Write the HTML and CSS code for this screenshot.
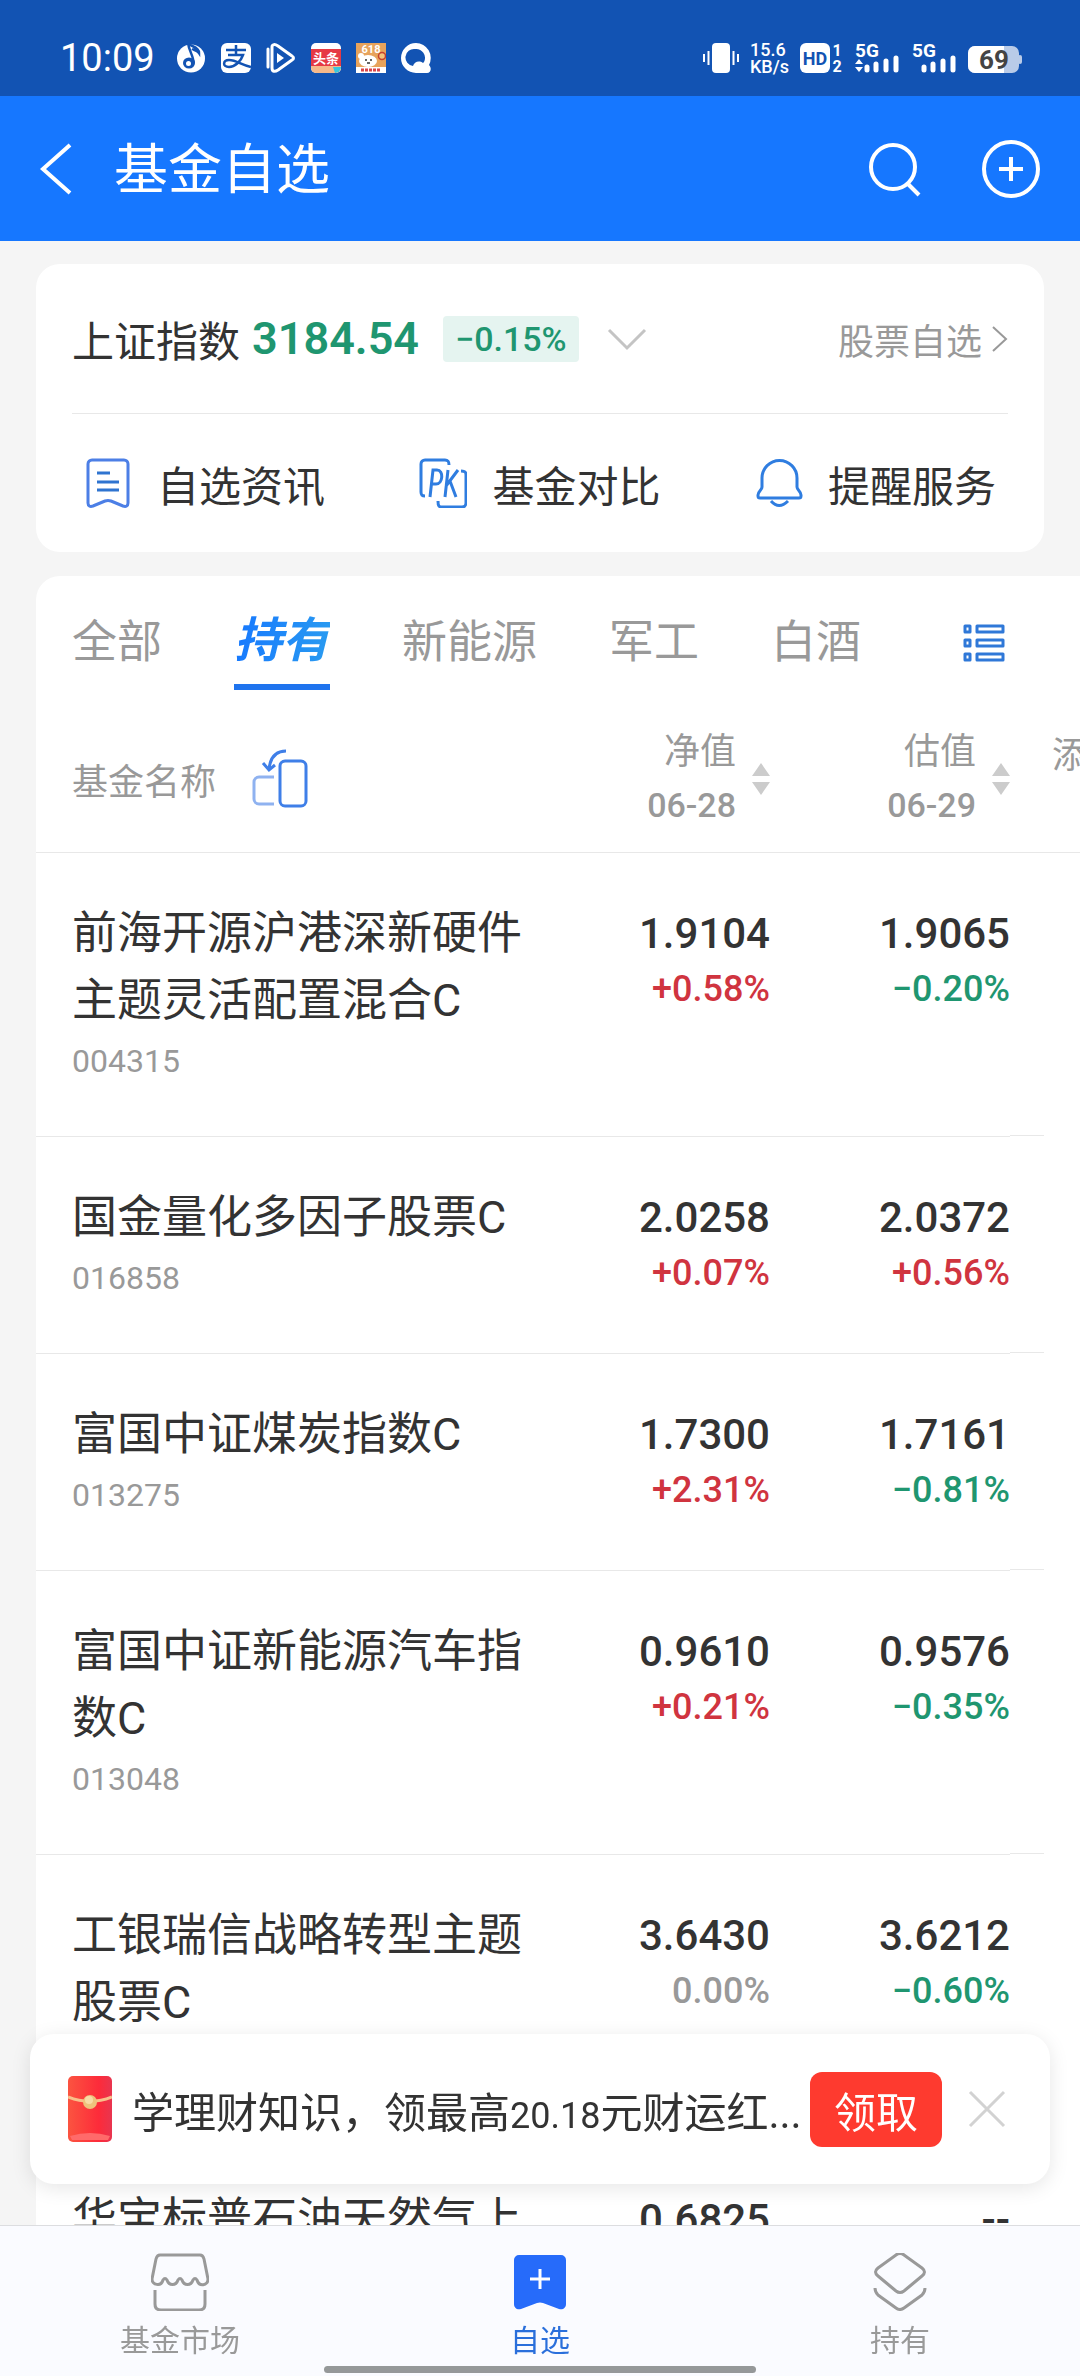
FILE: index.html
```
<!DOCTYPE html>
<html lang="zh-CN">
<head>

	<meta charset="utf-8" />
	<meta name="viewport" content="width=device-width, initial-scale=1" />
	<title>基金自选</title>

	<link rel="stylesheet" href="styles.css">

</head>

<body>

<div class="status">
	<div class="status-left">
		<span class="clock">10:09</span>
		<svg width="30" height="30" viewBox="0 0 30 30">
			<circle cx="15" cy="15.500" r="14" fill="#fff" />
			<ellipse cx="13" cy="20" rx="6" ry="5.500" fill="#1253b3" />
			<path d="M17.500 20C18 14 13 8 12 0c2 4 11 3 11 10-2-3-5-3-7-4" fill="none" stroke="#1253b3" stroke-width="2.500" />
			<circle cx="12.500" cy="20.500" r="2.500" fill="#fff" />
		</svg>
		<svg width="30" height="30" viewBox="0 0 30 30">
			<rect width="30" height="30" rx="6" fill="#fff" />
			<path d="M5 7h20M15 2v10M7 12h15c-2 6-8 12-14 12-7 0-6-7 0-7 7 0 13 5 22 7" fill="none" stroke="#1253b3" stroke-width="2.500" />
		</svg>
		<svg width="30" height="30" viewBox="0 0 30 30">
			<path d="M2 6v18M6 4c0-3 3-3 6-1l14 10c2 1 2 3 0 4L12 27c-3 2-6 2-6-2z" fill="none" stroke="#fff" stroke-width="3" stroke-linejoin="round" stroke-linecap="round" />
			<path d="M11 10l7 5-7 5z" fill="#fff" />
		</svg>
		<svg width="30" height="30" viewBox="0 0 30 30">
			<rect width="30" height="30" rx="5" fill="#fff" />
			<path d="M0 6h30v18H0z" fill="#e63a45" />
			<path d="M0 23h30v2a5 5 0 0 1-5 5H5a5 5 0 0 1-5-5z" fill="#f6b98a" />
			<path d="M22 24h8a6 6 0 0 1-6 6z" fill="#39c6dd" />
			<text class="icon-cjk" x="15" y="20" font-size="13" fill="#fff">头条</text>
		</svg>
		<svg width="30" height="30" viewBox="0 0 30 30">
			<rect width="30" height="30" fill="#e7a35c" />
			<path d="M0 24h30v6H0z" fill="#fff" />
			<path d="M5 27h19" stroke="#d9454a" stroke-width="3" stroke-dasharray="3 1" />
			<ellipse cx="12" cy="18" rx="9" ry="6" fill="#fff" />
			<circle cx="5" cy="13" r="3" fill="#fff" />
			<circle cx="26" cy="13" r="3.500" fill="#f3c27a" stroke="#c5402f" stroke-width="1.500" />
			<path d="M9 17h2M14 17h2M11 20h3" stroke="#333" stroke-width="1.500" />
			<text class="icon-text" x="15" y="10" font-size="11" fill="#fff">618</text>
		</svg>
		<svg width="30" height="30" viewBox="0 0 30 30">
			<path fill="#fff" fill-rule="evenodd" d="M15 0a15 15 0 0 1 13 22c3 3 2 8-2 8H15A15 15 0 0 1 15 0zM14 6a8.500 8.500 0 0 0-2 17c1-4 6-6 10-3l1-1A9 9 0 0 0 14 6z" />
		</svg>
	</div>
	<div class="status-right">
		<svg width="36" height="30" viewBox="0 0 36 30">
			<rect x="9" width="18" height="30" rx="4" fill="#fff" />
			<path d="M1 11v8M5.500 8v14M30.500 8v14M35 11v8" stroke="#fff" stroke-width="2" />
		</svg>
		<span class="speed">15.6<br>KB/s</span>
		<svg width="43" height="30" viewBox="0 0 43 30">
			<rect width="30" height="30" rx="6" fill="#fff" />
			<text class="icon-text" x="15" y="22" font-size="18" fill="#1253b3">HD</text>
			<text class="icon-text" x="37" y="13" font-size="16" fill="#fff">1</text>
			<text class="icon-text" x="37" y="29" font-size="16" fill="#fff">2</text>
		</svg>
		<svg width="46" height="30" viewBox="0 0 46 30">
			<text class="icon-text" x="13" y="14" font-size="19" fill="#fff">5G</text>
			<path d="M1 21l4-5 4 5zM1 24h8l-4 5z" fill="#fff" />
			<path d="M13 24v3M22 21v6M32 18v9M42 15v12" stroke="#fff" stroke-width="5" stroke-linecap="round" />
		</svg>
		<svg width="46" height="30" viewBox="0 0 46 30">
			<text class="icon-text" x="13" y="14" font-size="19" fill="#fff">5G</text>
			<path d="M13 24v3M22 21v6M32 18v9M42 15v12" stroke="#fff" stroke-width="5" stroke-linecap="round" />
		</svg>
		<svg width="54" height="30" viewBox="0 0 54 30">
			<rect y="3" width="51" height="27" rx="7" fill="#b9cbe8" />
			<path d="M7 3h29v27H7a7 7 0 0 1-7-7V10a7 7 0 0 1 7-7z" fill="#fff" />
			<rect x="50" y="12" width="4" height="9" rx="2" fill="#b9cbe8" />
			<text class="icon-text" x="26" y="26" font-size="26" fill="#444">69</text>
		</svg>
	</div>
</div>

<header class="header">
	<button class="icon-button" aria-label="返回">
		<svg width="32" height="52" viewBox="0 0 32 52">
			<path d="M30 2L3 26l27 24" fill="none" stroke="#fff" stroke-width="4" />
		</svg>
	</button>
	<h1 class="title">基金自选</h1>
	<button class="icon-button" aria-label="搜索">
		<svg width="54" height="58" viewBox="0 0 54 58">
			<circle cx="25" cy="27" r="22" fill="none" stroke="#fff" stroke-width="4" />
			<path d="M39 43l12 12" stroke="#fff" stroke-width="4" />
		</svg>
	</button>
	<button class="icon-button" aria-label="添加">
		<svg width="58" height="58" viewBox="0 0 58 58">
			<circle cx="29" cy="29" r="27" fill="none" stroke="#fff" stroke-width="4" />
			<path d="M29 17v24M17 29h24" stroke="#fff" stroke-width="4" />
		</svg>
	</button>
</header>

<main>

	<section class="card">
		<div class="index">
			<span class="index-name">上证指数</span>
			<span class="index-value">3184.54</span>
			<span class="index-change">−0.15%</span>
			<button class="icon-button" aria-label="展开">
				<svg width="40" height="24" viewBox="0 0 40 24">
					<path d="M2 3l18 18L38 3" fill="none" stroke="#c4c4c4" stroke-width="3" />
				</svg>
			</button>
			<a class="stock-link" href="#">
				股票自选
				<svg width="18" height="26" viewBox="0 0 18 26">
					<path d="M3 1l13 12L3 25" fill="none" stroke="#999" stroke-width="2" />
				</svg>
			</a>
		</div>
		<div class="tools">
			<a class="tool" href="#">
				<svg width="48" height="50" viewBox="0 0 48 50">
					<path d="M8 2h32a4 4 0 0 1 4 4v39c0 3-2 4-5 3l-12-5q-3-1-6 0L9 48c-3 1-5 0-5-3V6a4 4 0 0 1 4-4z" fill="none" stroke="#4c7fe6" stroke-width="3" />
					<path d="M13 15h13M13 24h22M13 32h22" stroke="#2f74d0" stroke-width="3" />
				</svg>
				自选资讯
			</a>
			<a class="tool" href="#">
				<svg width="48" height="50" viewBox="0 0 48 50">
					<path d="M6 38c-3 0-4-1-4-4V6a4 4 0 0 1 4-4h20c3 0 4 1 4 5M42 13c4 0 5 1 5 4v28a4 4 0 0 1-4 4H23c-3 0-4-1-4-6" fill="none" stroke="#2f7de0" stroke-width="3" />
					<path d="M11 39l3-27h4c7 0 6 14-1 14h-5M26 39l3-27M39 12L27 28M31 23l6 16" fill="none" stroke="#2f7de0" stroke-width="3" />
				</svg>
				基金对比
			</a>
			<a class="tool" href="#">
				<svg width="48" height="50" viewBox="0 0 48 50">
					<path d="M7 29V20a17 17 0 0 1 35 0v9c0 3 4 4 4 8v1q0 2-2 2H5q-2 0-2-2v-1c0-4 4-5 4-8z" fill="none" stroke="#2f7de0" stroke-width="3" />
					<path d="M16 43q8 9 17 0" fill="none" stroke="#2f7de0" stroke-width="3" />
				</svg>
				提醒服务
			</a>
		</div>
	</section>

	<section class="funds">
		<nav class="tabs">
			<a class="tab" href="#">全部</a>
			<a class="tab active" href="#"><span>持有</span></a>
			<a class="tab" href="#">新能源</a>
			<a class="tab" href="#">军工</a>
			<a class="tab" href="#">白酒</a>
			<button class="icon-button list-button" aria-label="分组列表">
				<svg width="42" height="38" viewBox="0 0 42 38">
					<path d="M2 2h5v6H2zM14 2h26v6H14zM2 16h5v6H2zM14 16h26v6H14zM2 30h5v6H2zM14 30h26v6H14z" fill="none" stroke="#2f78d8" stroke-width="3" stroke-linejoin="round" />
				</svg>
			</button>
		</nav>

		<table class="table">
			<thead>
				<tr>
					<th class="name">
						<div class="name-head">
							基金名称
							<svg width="56" height="60" viewBox="0 0 56 60">
								<rect x="28" y="12" width="26" height="45" rx="5" fill="none" stroke="#3f7fe8" stroke-width="3" />
								<path d="M22 28H7a5 5 0 0 0-5 5v17a5 5 0 0 0 5 5h15" fill="none" stroke="#8fb2f0" stroke-width="3" />
								<path d="M34 2C24 2 18 8 17 21M11 14l6 7 6-5" fill="none" stroke="#3f7fe8" stroke-width="3" />
							</svg>
						</div>
					</th>
					<th class="number">
						<div class="sort">
							<span>净值<br><span class="date">06-28</span></span>
							<svg width="18" height="32" viewBox="0 0 18 32"><path d="M0 13L9 0l9 13zM0 19h18L9 32z" fill="#ccc" /></svg>
						</div>
					</th>
					<th class="number">
						<div class="sort">
							<span>估值<br><span class="date">06-29</span></span>
							<svg width="18" height="32" viewBox="0 0 18 32"><path d="M0 13L9 0l9 13zM0 19h18L9 32z" fill="#ccc" /></svg>
						</div>
					</th>
					<th class="more">添</th>
				</tr>
			</thead>
			<tbody>
				<tr>
					<td class="name">前海开源沪港深新硬件主题灵活配置混合C<small>004315</small></td>
					<td class="number">1.9104<small class="up">+0.58%</small></td>
					<td class="number">1.9065<small class="down">−0.20%</small></td>
					<td class="more"></td>
				</tr>
				<tr>
					<td class="name">国金量化多因子股票C<small>016858</small></td>
					<td class="number">2.0258<small class="up">+0.07%</small></td>
					<td class="number">2.0372<small class="up">+0.56%</small></td>
					<td class="more"></td>
				</tr>
				<tr>
					<td class="name">富国中证煤炭指数C<small>013275</small></td>
					<td class="number">1.7300<small class="up">+2.31%</small></td>
					<td class="number">1.7161<small class="down">−0.81%</small></td>
					<td class="more"></td>
				</tr>
				<tr>
					<td class="name">富国中证新能源汽车指数C<small>013048</small></td>
					<td class="number">0.9610<small class="up">+0.21%</small></td>
					<td class="number">0.9576<small class="down">−0.35%</small></td>
					<td class="more"></td>
				</tr>
				<tr>
					<td class="name">工银瑞信战略转型主题股票C<small>&nbsp;</small></td>
					<td class="number">3.6430<small>0.00%</small></td>
					<td class="number">3.6212<small class="down">−0.60%</small></td>
					<td class="more"></td>
				</tr>
				<tr>
					<td class="name">华宝标普石油天然气上</td>
					<td class="number">0.6825</td>
					<td class="number">--</td>
					<td class="more"></td>
				</tr>
			</tbody>
		</table>
	</section>

</main>

<div class="dock">
	<div class="banner">
		<svg width="44" height="66" viewBox="0 0 44 66">
			<defs>
				<linearGradient id="packet" x1="0" y1="0" x2="1" y2="0">
					<stop offset="0" stop-color="#fb5440" />
					<stop offset="0.700" stop-color="#fd2b3a" />
					<stop offset="1" stop-color="#e8354f" />
				</linearGradient>
			</defs>
			<rect width="44" height="66" rx="5" fill="url(#packet)" />
			<path d="M2 60q20-6 40 0l-2 4H4z" fill="#ff6a6a" />
			<path d="M0 21q22 9 44 0" fill="none" stroke="#f8c08a" stroke-width="3" />
			<circle cx="22" cy="26" r="7" fill="#eec27c" />
			<circle cx="21" cy="24" r="4" fill="#f8dba6" />
		</svg>
		<span class="banner-text">学理财知识，领最高<span class="amount">20.18</span>元财运红...</span>
		<button class="claim">领取</button>
		<button class="icon-button" aria-label="关闭">
			<svg width="38" height="38" viewBox="0 0 38 38">
				<path d="M2 2l34 34M36 2L2 36" stroke="#d2d2d2" stroke-width="3" />
			</svg>
		</button>
	</div>

	<nav class="nav">
		<a class="nav-item" href="#">
			<svg width="58" height="58" viewBox="0 0 58 58">
				<path d="M9 2h40q3 0 4 4l4 20c0 7-9 8-11 1q-2-3-4 0c-2 6-9 6-11 0q-2-3-4 0c-2 6-9 6-11 0q-2-3-4 0C10 34 1 32 1 26L5 6q1-4 4-4z" fill="none" stroke="#999" stroke-width="3" />
				<path d="M4 37v14q0 6 6 6h38q6 0 6-6V37" fill="none" stroke="#999" stroke-width="3" />
			</svg>
			基金市场
		</a>
		<a class="nav-item current" href="#">
			<svg width="58" height="58" viewBox="0 0 58 58">
				<path d="M8 2h42a5 5 0 0 1 5 5v44c0 4-3 6-7 5l-16-6q-3-1-6 0l-16 6c-4 1-7-1-7-5V7a5 5 0 0 1 5-5z" fill="#266bfa" />
				<path d="M29 16v20M19 26h20" stroke="#fff" stroke-width="3" />
			</svg>
			自选
		</a>
		<a class="nav-item" href="#">
			<svg width="58" height="58" viewBox="0 0 58 58">
				<path d="M25 2q4-3 8 0l18 13q5 4 0 8L33 38q-4 3-8 0L7 23q-5-4 0-8z" fill="none" stroke="#999" stroke-width="3" />
				<path d="M4 35q0 4 3 7l18 13q4 3 8 0l18-13q3-3 3-7" fill="none" stroke="#999" stroke-width="3" />
			</svg>
			持有
		</a>
	</nav>
	<div class="home-bar"></div>
</div>

</body>
</html>
```
FILE: styles.css
```
* {
	box-sizing: border-box;
}
html {
	height: 100%;
}
body {
	margin: 0;
	height: 100%;
	overflow: hidden;
	background: #f5f5f5;
	color: #333;
	font-family: Roboto, 'Noto Sans CJK SC', sans-serif;
	font-size: 42px;
}
a {
	color: inherit;
	text-decoration: none;
}
svg {
	display: block;
	flex: none;
}
button {
	margin: 0;
	padding: 0;
	border: 0;
	font-family: inherit;
	font-size: inherit;
}
.icon-button {
	flex: none;
	background: none;
}

/* status bar */
.status {
	display: flex;
	justify-content: space-between;
	height: 96px;
	padding: 20px 58px 0 60px;
	background: #1253b3;
	color: #fff;
}
.status-left,
.status-right {
	display: flex;
	align-items: center;
	gap: 15px;
}
.status-right {
	gap: 11px;
}
.clock {
	margin-right: 6px;
	font-size: 38px;
}
.speed {
	font-size: 18px;
	font-weight: 500;
	line-height: 17px;
}
.icon-text {
	font-weight: 700;
	text-anchor: middle;
}
.icon-cjk {
	font-family: 'Noto Sans CJK SC', sans-serif;
	font-weight: 700;
	text-anchor: middle;
}

/* title bar */
.header {
	display: flex;
	align-items: center;
	gap: 60px;
	height: 145px;
	padding: 0 40px;
	background: #1677ff;
	color: #fff;
}
.title {
	flex: 1;
	margin: 0 0 0 -18px;
	padding-bottom: 6px;
	font-size: 54px;
	font-weight: 400;
}

/* index card */
.card {
	margin: 23px 36px 24px;
	padding: 0 36px;
	border-radius: 24px;
	background: #fff;
}
.index {
	display: flex;
	align-items: center;
	height: 150px;
	border-bottom: 1px solid #e8e8e8;
}
.index-name {
	margin-right: 12px;
}
.index-value {
	margin-right: 24px;
	color: #1f9670;
	font-size: 45px;
	font-weight: 600;
}
.index-change {
	margin-right: 28px;
	padding: 0 12px;
	border-radius: 4px;
	background: #e5f4f0;
	color: #1f9670;
	font-size: 34px;
	font-weight: 500;
	line-height: 46px;
}
.stock-link {
	display: flex;
	align-items: center;
	gap: 8px;
	margin-left: auto;
	color: #999;
	font-size: 36px;
}
.tools {
	display: flex;
	justify-content: space-between;
	padding: 0 12px;
}
.tool {
	display: flex;
	align-items: center;
	gap: 25px;
	height: 138px;
}

/* fund list */
.funds {
	margin-left: 36px;
	border-radius: 24px 0 0;
	background: #fff;
}
.tabs {
	display: flex;
	align-items: center;
	gap: 72px;
	height: 134px;
	padding: 0 75px 0 36px;
	color: #999;
	font-size: 45px;
	white-space: nowrap;
}
.tab {
	line-height: 94px;
}
.active {
	padding-top: 2px;
	border-bottom: 6px solid #1f74ee;
	font-size: 48px;
	font-style: italic;
	font-weight: 700;
	line-height: 86px;
}
.active span {
	background: linear-gradient(100deg, #1677ff, #2a9cf0);
	-webkit-background-clip: text;
	background-clip: text;
	color: transparent;
}
.list-button {
	margin-left: auto;
}
.table {
	width: 100%;
	border-collapse: collapse;
	table-layout: fixed;
}
.table th,
.table td {
	border-bottom: 1px solid #e8e8e8;
	padding: 0;
	vertical-align: top;
}
.table th {
	height: 142px;
	padding-bottom: 4px;
	color: #999;
	font-size: 36px;
	font-weight: 400;
	text-align: left;
	vertical-align: middle;
}
.table td {
	padding: 47px 0 48px;
	line-height: 67px;
}
.table .name {
	padding-left: 36px;
	font-size: 45px;
}
.table .number {
	width: 240px;
	font-weight: 500;
	text-align: right;
}
.table .more {
	width: 70px;
	overflow: hidden;
}
.table th.name,
.table th.number {
	font-size: 36px;
	font-weight: 400;
}
.table th.more {
	padding: 0 0 58px 42px;
	white-space: nowrap;
}
.table td.more {
	border-bottom: 0;
	background: linear-gradient(#e8e8e8, #e8e8e8) 0 100% / 34px 1px no-repeat;
}
.name-head {
	display: flex;
	align-items: center;
	gap: 36px;
}
.sort {
	display: flex;
	align-items: center;
	justify-content: flex-end;
	gap: 16px;
	line-height: 53px;
}
.date {
	font-size: 34px;
	font-weight: 500;
}
.table small {
	display: block;
	color: #999;
	font-size: 36px;
	line-height: 45px;
}
.table .name small {
	font-size: 32px;
	line-height: 54px;
}
.table .up {
	color: #d0343f;
}
.table .down {
	color: #1f9670;
}

/* fixed to the bottom of the window */
.dock {
	position: fixed;
	right: 0;
	bottom: 0;
	left: 0;
}
.banner {
	display: flex;
	align-items: center;
	height: 150px;
	margin: 0 30px 41px;
	padding: 0 44px 0 38px;
	border-radius: 24px;
	background: #fff;
	box-shadow: 0 4px 20px rgba(0, 0, 0, 0.1);
}
.banner-text {
	flex: 1;
	margin-left: 20px;
	white-space: nowrap;
}
.amount {
	font-size: 36px;
}
.claim {
	width: 132px;
	height: 75px;
	margin-right: 26px;
	border-radius: 12px;
	background: #fe3a2f;
	color: #fff;
}
.nav {
	display: flex;
	height: 151px;
	padding-top: 27px;
	border-top: 1px solid #dcdde0;
	background: #fafbff;
}
.nav-item {
	display: flex;
	flex: 1;
	flex-direction: column;
	align-items: center;
	gap: 5px;
	color: #999;
	font-size: 30px;
}
.current {
	color: #2a6fdb;
}
.home-bar {
	position: absolute;
	bottom: 3px;
	left: 30%;
	width: 40%;
	height: 7px;
	border-radius: 4px;
	background: #959899;
}
```
